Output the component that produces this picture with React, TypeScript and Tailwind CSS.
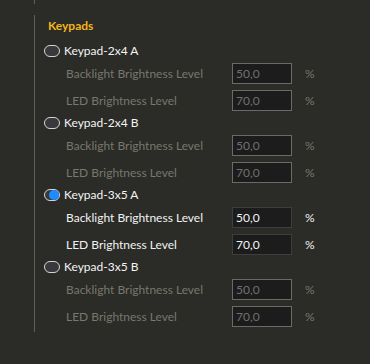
import React from 'react';

type Group = { name: string; active: boolean; backlight: string; led: string };

const groups: Group[] = [
  { name: 'Keypad-2x4 A', active: false, backlight: '50,0', led: '70,0' },
  { name: 'Keypad-2x4 B', active: false, backlight: '50,0', led: '70,0' },
  { name: 'Keypad-3x5 A', active: true, backlight: '50,0', led: '70,0' },
  { name: 'Keypad-3x5 B', active: false, backlight: '50,0', led: '70,0' },
];

function Radio({ on }: { on: boolean }) {
  return (
    <div className="flex h-3 w-4 items-center justify-end rounded-full border border-[#d6d6d6] bg-[#38383d]">
      {on && <div className="h-[10px] w-[10px] rounded-full bg-[#1e8cff]" />}
    </div>
  );
}

function Field({ label, value, on }: { label: string; value: string; on: boolean }) {
  return (
    <div className="flex h-[21px] items-center">
      <span className={`w-[188px] pl-[22px] ${on ? 'text-[#f2f2f2]' : 'text-[#78786f]'}`}>{label}</span>
      <div
        className={`flex h-[21px] w-[60px] items-center border bg-[#1c1c1c] pl-[3px] ${
          on ? 'border-[#3e3e3e] text-[#f4f4f4]' : 'border-[#6a6a66] text-[#707070]'
        }`}
      >
        {value}
      </div>
      <span className={`ml-[13px] ${on ? 'text-[#f2f2f2]' : 'text-[#78786f]'}`}>%</span>
    </div>
  );
}

export default function App() {
  return (
    <div
      className="h-[364px] w-[370px] bg-[#2b2b27] pl-[34px] text-[12px]"
      style={{ fontFamily: 'Lato, "Noto Sans", sans-serif' }}
    >
      <div className="h-[4px] w-px bg-[#5e5e5a]" />
      <div className="mt-[11px] h-[317px] border-l border-[#5e5e5a] pl-[13px] pt-[3px]">
        <div className="h-[16px] leading-[16px] font-bold text-[#f2b51b]">Keypads</div>
        <div className="mt-[7px] flex flex-col gap-[2px] ml-[-4px]">
          {groups.map((g) => (
            <div key={g.name} className="flex flex-col">
              <div className="flex h-5 items-center gap-1">
                <Radio on={g.active} />
                <span className="text-[#f4f4f4]">{g.name}</span>
              </div>
              <div className="mt-[2px] flex flex-col gap-[6px]">
                <Field label="Backlight Brightness Level" value={g.backlight} on={g.active} />
                <Field label="LED Brightness Level" value={g.led} on={g.active} />
              </div>
            </div>
          ))}
        </div>
      </div>
    </div>
  );
}
